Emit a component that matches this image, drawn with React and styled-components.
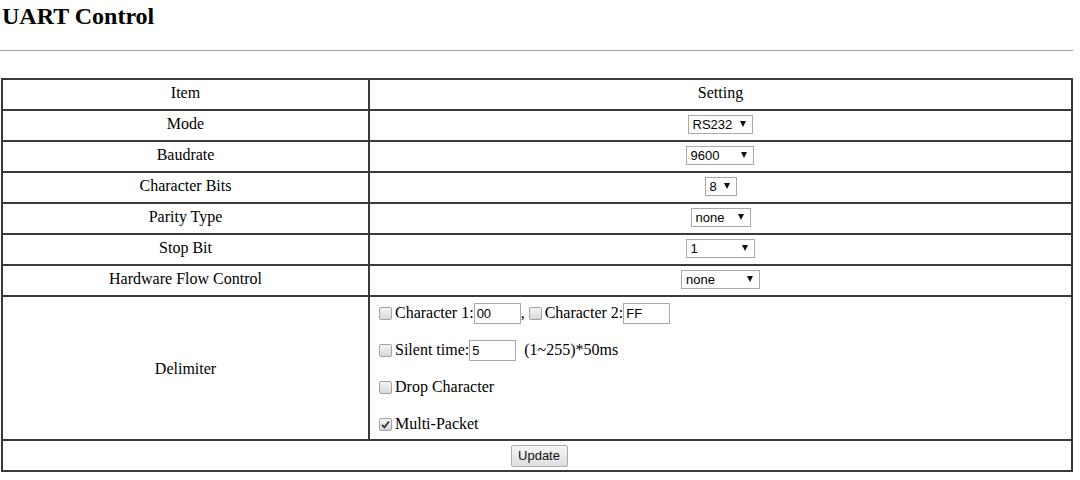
import React from 'react';
import styled, { createGlobalStyle } from 'styled-components';

const GlobalStyle = createGlobalStyle`
  html, body {
    margin: 0;
    padding: 0;
    background: #ffffff;
    color: #000000;
    font-family: "Liberation Serif", "Times New Roman", serif;
    font-size: 16px;
  }
`;

const Page = styled.div`
  width: 1074px;
  padding-top: 3px;
`;

const Title = styled.h2`
  margin: 0 0 0 2px;
  font-size: 24px;
  font-weight: bold;
  line-height: 27px;
`;

const Rule = styled.hr`
  margin: 20px 0 0 0;
  border: none;
  border-top: 1px solid #a0a0a0;
  height: 0;
  width: 1073px;
`;

const Grid = styled.div`
  margin: 27px 0 0 1px;
  width: 1068px;
  display: grid;
  grid-template-columns: 365px 1fr;
  gap: 2px;
  padding: 2px;
  background: #3a3a3a;
`;

const Cell = styled.div`
  box-sizing: border-box;
  background: #ffffff;
  min-height: ${({ $tall }) => ($tall ? '142px' : '29px')};
  display: flex;
  align-items: center;
  justify-content: ${({ $left }) => ($left ? 'flex-start' : 'center')};
  grid-column: ${({ $span }) => ($span ? '1 / -1' : 'auto')};
  padding-left: ${({ $left }) => ($left ? '9px' : '0')};
  padding-bottom: ${({ $tall }) => ($tall ? '0' : '3px')};
  padding-top: ${({ $tall }) => ($tall ? '1px' : '0')};
`;

const SelectBox = styled.div`
  box-sizing: border-box;
  width: ${({ $w }) => $w}px;
  height: 19px;
  border: 1px solid #a9a9a9;
  background: #ffffff;
  display: flex;
  align-items: center;
  justify-content: space-between;
  padding: 0 6px 0 4px;
  font-family: "Liberation Sans", Arial, sans-serif;
  font-size: 13px;
  margin-left: ${({ $dx }) => $dx || 0}px;
`;

const Arrow = styled.span`
  width: 0;
  height: 0;
  border-left: 3.5px solid transparent;
  border-right: 3.5px solid transparent;
  border-top: 6px solid #111111;
`;

const Lines = styled.div`
  display: flex;
  flex-direction: column;
  gap: 15px;
`;

const Line = styled.div`
  display: flex;
  align-items: center;
  height: 22px;
  white-space: pre;
`;

const Box = styled.span`
  box-sizing: border-box;
  width: 13px;
  height: 13px;
  margin-right: 3px;
  border: 1px solid #a3a3a3;
  border-radius: 2px;
  background: linear-gradient(#f4f4f4, #d8d8d8);
  display: inline-flex;
  align-items: center;
  justify-content: center;
  margin-left: ${({ $ml }) => $ml || 0}px;
`;

const TextInput = styled.span`
  box-sizing: border-box;
  width: ${({ $w }) => $w || 47}px;
  height: 21px;
  border: 1px solid #a9a9a9;
  padding-left: 2px;
  display: inline-flex;
  align-items: center;
  font-family: "Liberation Sans", Arial, sans-serif;
  font-size: 13px;
`;

const Button = styled.button`
  box-sizing: border-box;
  width: 57px;
  height: 22px;
  margin-left: 4px;
  margin-bottom: -3px;
  border: 1px solid #adadad;
  border-radius: 2px;
  background: linear-gradient(#f6f6f6, #dedede);
  font-family: "Liberation Sans", Arial, sans-serif;
  font-size: 13px;
  color: #111111;
  padding: 0;
`;

const Check = ({ checked, ml }) => (
  <Box $ml={ml}>
    {checked && (
      <svg width="9" height="9" viewBox="0 0 9 9">
        <path d="M1 4.8 L3.4 7.3 L8 1.5" fill="none" stroke="#333" strokeWidth="1.8" />
      </svg>
    )}
  </Box>
);

const rows = [
  ['Mode', 'RS232', 65, -1],
  ['Baudrate', '9600', 68, -2],
  ['Character Bits', '8', 32, 0],
  ['Parity Type', 'none', 60, 0],
  ['Stop Bit', '1', 69, -1],
  ['Hardware Flow Control', 'none', 79, 0],
];

export default function App() {
  return (
    <Page>
      <GlobalStyle />
      <Title>UART Control</Title>
      <Rule />
      <Grid>
        <Cell>Item</Cell>
        <Cell>Setting</Cell>
        {rows.map(([label, value, w, dx]) => (
          <React.Fragment key={label}>
            <Cell>{label}</Cell>
            <Cell>
              <SelectBox $w={w} $dx={dx}>
                <span>{value}</span>
                <Arrow />
              </SelectBox>
            </Cell>
          </React.Fragment>
        ))}
        <Cell $tall>Delimiter</Cell>
        <Cell $tall $left>
          <Lines>
            <Line>
              <Check />
              Character 1:<TextInput>00</TextInput>,<Check ml={4} />
              Character 2:<TextInput>FF</TextInput>
            </Line>
            <Line>
              <Check />
              Silent time:<TextInput>5</TextInput>  (1~255)*50ms
            </Line>
            <Line>
              <Check />
              Drop Character
            </Line>
            <Line>
              <Check checked />
              Multi-Packet
            </Line>
          </Lines>
        </Cell>
        <Cell $span>
          <Button>Update</Button>
        </Cell>
      </Grid>
    </Page>
  );
}
